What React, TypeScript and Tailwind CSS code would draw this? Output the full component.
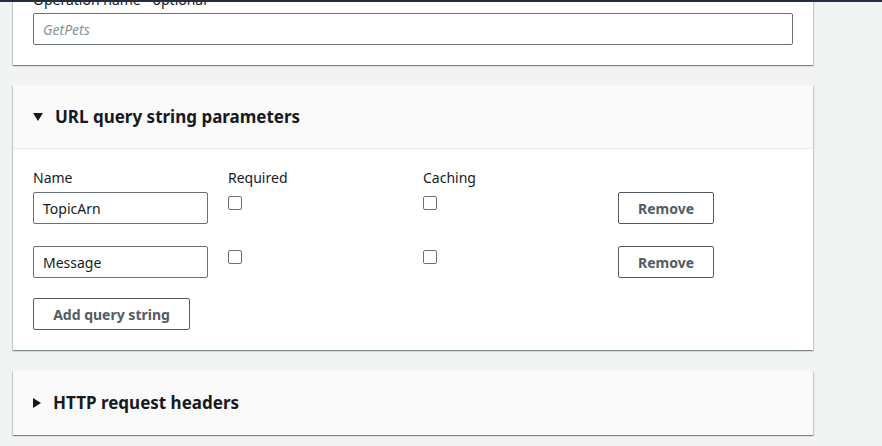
import React from "react";

const card =
  "ml-[13px] w-[800px] bg-white shadow-[0_1px_1px_0_rgba(0,28,36,0.3),1px_1px_1px_0_rgba(0,28,36,0.15),-1px_1px_1px_0_rgba(0,28,36,0.15)]";

function Checkbox() {
  return <div className="mt-1 w-[14px] h-[14px] border border-[#687078] rounded-[2px] bg-white" />;
}

function Row({ name }: { name: string }) {
  return (
    <div className="flex items-start">
      <div className="w-[195px]">
        <div className="w-[175px] h-[32px] border border-[#687078] rounded-[2px] px-[9px] flex items-center text-[14px] text-[#16191f]">
          {name}
        </div>
      </div>
      <div className="w-[195px]">
        <Checkbox />
      </div>
      <div className="w-[195px]">
        <Checkbox />
      </div>
      <button className="w-[96px] h-[32px] border border-[#545b64] rounded-[2px] text-[14px] font-bold text-[#545b64] bg-white">
        Remove
      </button>
    </div>
  );
}

export default function App() {
  return (
    <div
      className="h-[446px] w-[882px] overflow-hidden bg-[#f2f3f3]"
      style={{ fontFamily: '"Noto Sans", "Open Sans", sans-serif' }}
    >
      <div className="relative z-10 h-[2px] bg-[#232f3e]" />
      <div className={card + " mt-[-32px] px-5 pt-[20px] pb-[20px]"}>
        <div className="text-[14px] leading-[20px] text-[#16191f] mb-[3px]">Operation name - optional</div>
        <div className="h-[32px] border border-[#687078] rounded-[2px] px-[9px] flex items-center text-[14px] italic text-[#879596]">
          GetPets
        </div>
      </div>

      <div className={card + " mt-5"}>
        <div className="h-[64px] bg-[#fafafa] border-b border-[#eaeded] px-5 flex items-center gap-[12px]">
          <svg width="10" height="8" viewBox="0 0 10 8">
            <path d="M0 0 H10 L5 8 Z" fill="#16191f" />
          </svg>
          <span className="text-[17px] font-bold text-[#16191f]">URL query string parameters</span>
        </div>
        <div className="px-5 pt-[19px] pb-5">
          <div className="flex text-[14px] leading-[20px] text-[#16191f] mb-[4px]">
            <div className="w-[195px]">Name</div>
            <div className="w-[195px]">Required</div>
            <div className="w-[195px]">Caching</div>
          </div>
          <div className="flex flex-col gap-[22px]">
            <Row name="TopicArn" />
            <Row name="Message" />
          </div>
          <button className="mt-5 w-[157px] h-[32px] border border-[#545b64] rounded-[2px] text-[14px] font-bold text-[#545b64] bg-white">
            Add query string
          </button>
        </div>
      </div>

      <div className={card + " mt-[21px]"}>
        <div className="h-[64px] bg-[#fafafa] px-5 flex items-center gap-[12px]">
          <svg width="8" height="10" viewBox="0 0 8 10">
            <path d="M0 0 V10 L8 5 Z" fill="#16191f" />
          </svg>
          <span className="text-[17px] font-bold text-[#16191f]">HTTP request headers</span>
        </div>
      </div>
    </div>
  );
}
